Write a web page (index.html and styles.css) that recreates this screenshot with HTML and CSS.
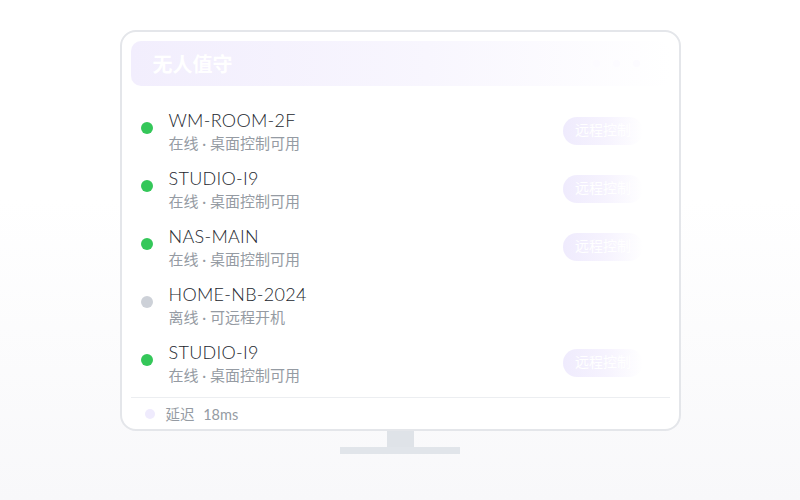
FILE: index.html
```html
<!DOCTYPE html>
<html lang="zh-CN">
<head>
    <meta charset="UTF-8">
    <meta name="viewport" content="width=device-width, initial-scale=1.0">
    <title>无人值守</title>
    <link rel="stylesheet" href="styles.css">
</head>
<body>
<div class="monitor">
    <div class="screen">
        <div class="header">
            <span class="title">无人值守</span>
            <div class="header-dots">
                <span></span><span></span><span></span>
            </div>
        </div>

        <ul class="devices">
            <li class="device">
                <span class="dot online"></span>
                <div class="info">
                    <div class="name">WM-ROOM-2F</div>
                    <div class="status">在线 · 桌面控制可用</div>
                </div>
                <span class="remote-btn">远程控制</span>
            </li>
            <li class="device">
                <span class="dot online"></span>
                <div class="info">
                    <div class="name">STUDIO-I9</div>
                    <div class="status">在线 · 桌面控制可用</div>
                </div>
                <span class="remote-btn">远程控制</span>
            </li>
            <li class="device">
                <span class="dot online"></span>
                <div class="info">
                    <div class="name">NAS-MAIN</div>
                    <div class="status">在线 · 桌面控制可用</div>
                </div>
                <span class="remote-btn">远程控制</span>
            </li>
            <li class="device">
                <span class="dot offline"></span>
                <div class="info">
                    <div class="name">HOME-NB-2024</div>
                    <div class="status">离线 · 可远程开机</div>
                </div>
            </li>
            <li class="device">
                <span class="dot online"></span>
                <div class="info">
                    <div class="name">STUDIO-I9</div>
                    <div class="status">在线 · 桌面控制可用</div>
                </div>
                <span class="remote-btn">远程控制</span>
            </li>
        </ul>

        <div class="footer">
            <span class="footer-dot"></span>
            <span class="latency">延迟 18ms</span>
        </div>
    </div>
    <div class="neck"></div>
    <div class="base"></div>
</div>
</body>
</html>
```

FILE: styles.css
```css
* {
    box-sizing: border-box;
}

html, body {
    height: 100%;
}

body {
    margin: 0;
    font-family: Lato, "Noto Sans CJK SC", sans-serif;
    background: linear-gradient(180deg, #ffffff 40%, #f8f8fa 100%);
    color: #1f2329;
}

.monitor {
    width: 561px;
    margin: 30px auto 0;
    display: flex;
    flex-direction: column;
    align-items: center;
}

.screen {
    width: 100%;
    height: 401px;
    background: #fff;
    border: 2px solid #e4e6ea;
    border-radius: 16px;
    padding: 9px 9px 0;
    display: flex;
    flex-direction: column;
}

/* header bar */
.header {
    height: 45px;
    border-radius: 10px;
    background: linear-gradient(90deg, #f2eefd 0%, #f8f6fe 55%, #ffffff 100%);
    display: flex;
    align-items: center;
    justify-content: space-between;
    padding: 0 22px;
}

.title {
    color: #fff;
    font-family: "Noto Sans CJK SC", sans-serif;
    font-size: 20px;
    font-weight: 700;
}

.header-dots {
    display: flex;
    gap: 13px;
    margin-right: 8px;
}

.header-dots span {
    width: 7px;
    height: 7px;
    border-radius: 50%;
    background: #fcfbff;
}

/* device list */
.devices {
    list-style: none;
    margin: 16px 0 0;
    padding: 0;
}

.device {
    height: 58px;
    display: flex;
    align-items: center;
    padding: 0 27px 0 10px;
}

.dot {
    width: 12px;
    height: 12px;
    border-radius: 50%;
    margin: -6px 16px 0 0;
    flex-shrink: 0;
}

.dot.online {
    background: #34c759;
}

.dot.offline {
    background: #cdd1d8;
}

.info {
    flex: 1;
}

.name {
    font-size: 18px;
    font-weight: 300;
    letter-spacing: 0.3px;
    line-height: 22px;
    color: #23272e;
}

.status {
    margin-top: 2px;
    font-size: 15px;
    line-height: 20px;
    color: #959ba3;
}

.remote-btn {
    height: 28px;
    padding: 0 12px;
    border-radius: 14px;
    background: linear-gradient(90deg, #efebfd 0%, #f6f3fe 55%, #ffffff 100%);
    color: #fff;
    font-family: serif;
    font-size: 14px;
    line-height: 28px;
}

/* footer */
.footer {
    margin-top: 5px;
    border-top: 1px solid #eceef1;
    flex: 1;
    display: flex;
    align-items: center;
    gap: 11px;
    padding-left: 14px;
    font-size: 14.5px;
    color: #959ba3;
}

.latency {
    word-spacing: 5px;
}

.footer-dot {
    width: 10px;
    height: 10px;
    border-radius: 50%;
    background: #efebfd;
}

/* stand */
.neck {
    width: 27px;
    height: 16px;
    background: #dfe3e8;
}

.base {
    width: 120px;
    height: 7px;
    background: #e1e5ea;
}
```
